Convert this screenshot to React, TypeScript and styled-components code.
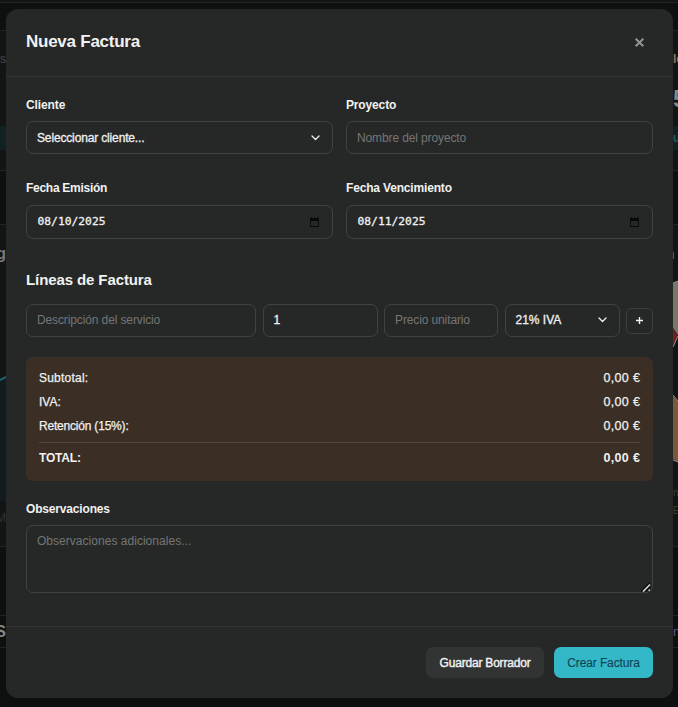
import React from "react";
import styled, { createGlobalStyle } from "styled-components";

const GlobalStyle = createGlobalStyle`
  * { box-sizing: border-box; }
  body {
    margin: 0;
    background: #0e100f;
    font-family: "Liberation Sans", Arial, sans-serif;
    color: #f0f1f1;
    overflow: hidden;
  }
`;

const Screen = styled.div`
  position: relative;
  width: 678px;
  height: 707px;
  overflow: hidden;
`;

/* Dimmed dashboard behind the dialog */
const Dashboard = styled.div`
  display: flex;
  flex-direction: column;
  height: 707px;
`;

const Band = styled.div<{ $h: number; $card?: boolean; $line?: boolean }>`
  display: flex;
  justify-content: space-between;
  flex: none;
  height: ${(p) => p.$h}px;
  background: ${(p) => (p.$card ? "#131514" : "#0e100f")};
  border-bottom: ${(p) => (p.$line ? "1px solid #212423" : "none")};
`;

const Edge = styled.div<{ $w: number; $right?: boolean }>`
  display: flex;
  flex-direction: column;
  align-items: ${(p) => (p.$right ? "flex-start" : "flex-end")};
  width: ${(p) => p.$w}px;
  overflow: hidden;
  white-space: nowrap;
`;

const Ghost = styled.div<{ $top: number; $size: number; $color: string; $bold?: boolean }>`
  flex: none;
  margin-top: ${(p) => p.$top}px;
  font-size: ${(p) => p.$size}px;
  line-height: ${(p) => p.$size}px;
  font-weight: ${(p) => (p.$bold ? 700 : 400)};
  color: ${(p) => p.$color};
`;

const Tint = styled.div<{ $top: number }>`
  flex: none;
  width: 100%;
  height: 24px;
  margin-top: ${(p) => p.$top}px;
  padding-top: 5px;
  background: #122123;
  color: #1b5c66;
  font-size: 12px;
  line-height: 14px;
  font-weight: 700;
`;

const Drawing = styled.svg<{ $top: number }>`
  display: block;
  flex: none;
  margin-top: ${(p) => p.$top}px;
`;

const Dialog = styled.section`
  position: absolute;
  left: 6px;
  top: 9px;
  width: 667px;
  height: 689px;
  display: flex;
  flex-direction: column;
  border-radius: 12px;
  background: #262828;
`;

const Header = styled.header`
  display: flex;
  align-items: center;
  justify-content: space-between;
  height: 68px;
  padding: 0 20px;
  border-bottom: 1px solid #333535;
`;

const Title = styled.h2`
  margin: 0;
  padding-bottom: 1px;
  font-size: 17px;
  line-height: 22px;
  font-weight: 700;
  letter-spacing: -0.25px;
`;

const CloseButton = styled.button`
  display: flex;
  margin: 0 8px 1px 0;
  padding: 0;
  border: 0;
  background: none;
  color: #939595;
`;

const Body = styled.div`
  flex: 1;
  padding: 20px 20px 0;
`;

const Pair = styled.div<{ $gap: number }>`
  display: grid;
  grid-template-columns: 1fr 1fr;
  column-gap: 13px;
  margin-bottom: ${(p) => p.$gap}px;
`;

const Label = styled.label<{ $spacing: number; $h?: number }>`
  display: block;
  height: ${(p) => p.$h ?? 24}px;
  font-size: 12px;
  line-height: 16px;
  font-weight: 700;
  letter-spacing: ${(p) => p.$spacing}px;
`;

const Control = styled.div<{ $h: number; $compact?: boolean }>`
  display: flex;
  align-items: center;
  justify-content: space-between;
  height: ${(p) => p.$h}px;
  padding: 0 12px ${(p) => (p.$compact ? 2 : 0)}px 10px;
  border: 1px solid #414343;
  border-radius: 7px;
  min-width: 0;
`;

const SelectValue = styled.span<{ $spacing?: number }>`
  font-size: 12px;
  line-height: 16px;
  letter-spacing: ${(p) => p.$spacing ?? 0}px;
  -webkit-text-stroke: 0.3px #f0f1f1;
`;

const DateValue = styled.span`
  font-family: "DejaVu Sans Mono", monospace;
  font-size: 11.3px;
  line-height: 16px;
  -webkit-text-stroke: 0.3px #f0f1f1;
  padding: 0 0 1px 0.5px;
`;

const Field = styled.input`
  width: 100%;
  padding: 0;
  border: 0;
  outline: 0;
  background: none;
  color: #f0f1f1;
  font: 12px/16px "Liberation Sans", Arial, sans-serif;
  letter-spacing: -0.12px;
  &::placeholder { color: #747676; opacity: 1; }
`;

const SectionTitle = styled.h3`
  margin: 0 0 14px;
  font-size: 15px;
  line-height: 20px;
  font-weight: 700;
  letter-spacing: -0.1px;
`;

const LineRow = styled.div`
  display: grid;
  grid-template-columns: 230px 115px 114px 115px 27px;
  column-gap: 6.5px;
  align-items: center;
  margin-bottom: 20px;
`;

const AddButton = styled.button`
  display: flex;
  align-items: center;
  justify-content: center;
  width: 27px;
  height: 26px;
  padding: 0 0 1px;
  border: 1px solid #3d3f3f;
  border-radius: 5px;
  background: none;
  color: #f0f1f1;
`;

const Totals = styled.dl`
  height: 124px;
  margin: 0 0 20px;
  padding: 13px;
  border-radius: 7px;
  background: #3b2e24;
`;

const TotalRow = styled.div<{ $final?: boolean }>`
  display: flex;
  justify-content: space-between;
  margin-bottom: 8px;
  padding-top: ${(p) => (p.$final ? 7 : 0)}px;
  border-top: ${(p) => (p.$final ? "1px solid #514540" : "none")};
  font-size: 12px;
  line-height: 16px;
  font-weight: ${(p) => (p.$final ? 700 : 400)};
  -webkit-text-stroke: ${(p) => (p.$final ? 0 : 0.25)}px #f0f1f1;
`;

const Term = styled.dt<{ $spacing: number }>`
  letter-spacing: ${(p) => p.$spacing}px;
`;

const Amount = styled.dd`
  margin: 0 -0.3px 0 0;
  font-size: 12.5px;
  letter-spacing: 0.35px;
`;

const NotesBox = styled.div`
  position: relative;
`;

const Notes = styled.textarea`
  display: block;
  width: 100%;
  height: 68px;
  padding: 7px 10px;
  border: 1px solid #414343;
  border-radius: 7px;
  outline: 0;
  background: none;
  resize: none;
  color: #f0f1f1;
  font: 12px/16px "Liberation Sans", Arial, sans-serif;
  &::placeholder { color: #747676; opacity: 1; letter-spacing: 0.03px; }
`;

const Grip = styled.svg`
  position: absolute;
  right: 2px;
  bottom: 1px;
`;

const Footer = styled.footer`
  display: flex;
  justify-content: flex-end;
  gap: 10px;
  height: 72px;
  padding: 20px 20px 0;
  border-top: 1px solid #333535;
`;

const Action = styled.button<{ $primary?: boolean }>`
  width: ${(p) => (p.$primary ? 99 : 118)}px;
  height: 31px;
  padding: 0;
  border: 0;
  border-radius: 7px;
  background: ${(p) => (p.$primary ? "#32b8c6" : "#323434")};
  color: ${(p) => (p.$primary ? "#134252" : "#f0f1f1")};
  font: 12px/16px "Liberation Sans", Arial, sans-serif;
  letter-spacing: ${(p) => (p.$primary ? -0.12 : -0.2)}px;
  -webkit-text-stroke: ${(p) => (p.$primary ? 0.1 : 0.4)}px currentColor;
`;

const Chevron = () => (
  <svg width="9" height="6" viewBox="0 0 9 6" fill="none" stroke="#f0f1f1" strokeWidth="1.3" strokeLinecap="round" strokeLinejoin="round">
    <path d="M1 1 4.5 4.5 8 1" />
  </svg>
);

const CalendarBox = styled.svg`
  margin: 0 1px 1px 0;
`;

const CalendarIcon = () => (
  <CalendarBox width="9" height="10" viewBox="0 0 9 10">
    <path d="M1 1h7a1 1 0 0 1 1 1v7a1 1 0 0 1-1 1H1a1 1 0 0 1-1-1V2a1 1 0 0 1 1-1Zm0 3v5h7V4Z" fill="#080909" fillRule="evenodd" />
    <path d="M1 0h1v1H1zM7 0h1v1H7z" fill="#080909" />
  </CalendarBox>
);

const totals = [
  { label: "Subtotal:", spacing: 0.22 },
  { label: "IVA:", spacing: 0 },
  { label: "Retención (15%):", spacing: -0.2 },
];

export default function App() {
  return (
    <Screen>
      <GlobalStyle />
      <Dashboard aria-hidden>
        <Band $h={3} $card $line />
        <Band $h={28} $line />
        <Band $h={140} $card $line>
          <Edge $w={6}>
            <Ghost $top={22} $size={12} $color="#494b4a">s</Ghost>
            <Tint $top={61} />
          </Edge>
          <Edge $w={5} $right>
            <Ghost $top={22} $size={12} $color="#8c7658" $bold>le</Ghost>
            <Ghost $top={22} $size={24} $color="#858787" $bold>5</Ghost>
            <Tint $top={15}>ue</Tint>
          </Edge>
        </Band>
        <Band $h={54} $line />
        <Band $h={322} $card $line>
          <Edge $w={6}>
            <Ghost $top={21} $size={16} $color="#77797a" $bold>g</Ghost>
            <Drawing $top={112} width="6" height="136">
              <path d="M0 7 6 3V127H0Z" fill="#121c1e" />
              <path d="M0 6 6 3" stroke="#176a73" strokeWidth="2" />
            </Drawing>
            <Ghost $top={2} $size={12} $color="#303232">M</Ghost>
          </Edge>
          <Edge $w={5} $right>
            <Drawing $top={27} width="5" height="228">
              <path d="M0 0h1v7H0z" fill="#7d5125" />
              <path d="M0 31 5 29V83L0 76Z" fill="#77776a" />
              <path d="M0 76 5 84 0 95Z" fill="#6e1f20" />
              <path d="M0 144 5 149V210L0 207Z" fill="#79583b" />
              <path d="M0 31 5 29M0 95 5 84M0 143 5 149M0 208 5 210" stroke="#8b8d8d" fill="none" />
            </Drawing>
            <Ghost $top={8} $size={10} $color="#3a3c3c">n</Ghost>
            <Ghost $top={8} $size={10} $color="#3a3c3c">En</Ghost>
          </Edge>
        </Band>
        <Band $h={69} $line />
        <Band $h={32} $line>
          <Edge $w={6}>
            <Ghost $top={8} $size={16} $color="#858787" $bold>S</Ghost>
          </Edge>
          <Edge $w={5} $right>
            <Ghost $top={9} $size={13} $color="#55558a">nt</Ghost>
          </Edge>
        </Band>
      </Dashboard>

      <Dialog role="dialog" aria-label="Nueva Factura">
        <Header>
          <Title>Nueva Factura</Title>
          <CloseButton aria-label="Cerrar">
            <svg width="11" height="9" viewBox="0 0 11 9" stroke="currentColor" strokeWidth="2">
              <path d="M1.7.7 9.3 8.3M9.3.7 1.7 8.3" />
            </svg>
          </CloseButton>
        </Header>
        <Body>
          <Pair $gap={26}>
            <div>
              <Label $spacing={-0.1}>Cliente</Label>
              <Control $h={33}>
                <SelectValue $spacing={-0.15}>Seleccionar cliente...</SelectValue>
                <Chevron />
              </Control>
            </div>
            <div>
              <Label $spacing={-0.15}>Proyecto</Label>
              <Control $h={33}>
                <Field placeholder="Nombre del proyecto" />
              </Control>
            </div>
          </Pair>
          <Pair $gap={31}>
            <div>
              <Label $spacing={-0.28} $h={25}>Fecha Emisión</Label>
              <Control $h={34}>
                <DateValue>08/10/2025</DateValue>
                <CalendarIcon />
              </Control>
            </div>
            <div>
              <Label $spacing={-0.17} $h={25}>Fecha Vencimiento</Label>
              <Control $h={34}>
                <DateValue>08/11/2025</DateValue>
                <CalendarIcon />
              </Control>
            </div>
          </Pair>
          <SectionTitle>Líneas de Factura</SectionTitle>
          <LineRow>
            <Control $h={33} $compact><Field placeholder="Descripción del servicio" /></Control>
            <Control $h={33} $compact><SelectValue>1</SelectValue></Control>
            <Control $h={33} $compact><Field placeholder="Precio unitario" /></Control>
            <Control $h={33} $compact>
              <SelectValue>21% IVA</SelectValue>
              <Chevron />
            </Control>
            <AddButton aria-label="Añadir línea">
              <svg width="7" height="7" viewBox="0 0 7 7" stroke="currentColor" strokeWidth="1.4">
                <path d="M3.5 0v7M0 3.5h7" />
              </svg>
            </AddButton>
          </LineRow>
          <Totals>
            {totals.map((t) => (
              <TotalRow key={t.label}>
                <Term $spacing={t.spacing}>{t.label}</Term>
                <Amount>0,00 €</Amount>
              </TotalRow>
            ))}
            <TotalRow $final>
              <Term $spacing={-0.2}>TOTAL:</Term>
              <Amount>0,00 €</Amount>
            </TotalRow>
          </Totals>
          <Label $spacing={-0.17}>Observaciones</Label>
          <NotesBox>
            <Notes placeholder="Observaciones adicionales..." />
            <Grip width="10" height="10" viewBox="0 0 10 10">
              <path d="M0 9.5 8.5 1M4.5 9.5 9.5 4.5" stroke="#0a0b0b" strokeWidth="1.6" />
              <path d="M2 9.5 9 2.5" stroke="#d8dada" strokeWidth="1.6" />
              <path d="M7.5 7.5H9V9H7.5z" fill="#d8dada" />
            </Grip>
          </NotesBox>
        </Body>
        <Footer>
          <Action>Guardar Borrador</Action>
          <Action $primary>Crear Factura</Action>
        </Footer>
      </Dialog>
    </Screen>
  );
}
